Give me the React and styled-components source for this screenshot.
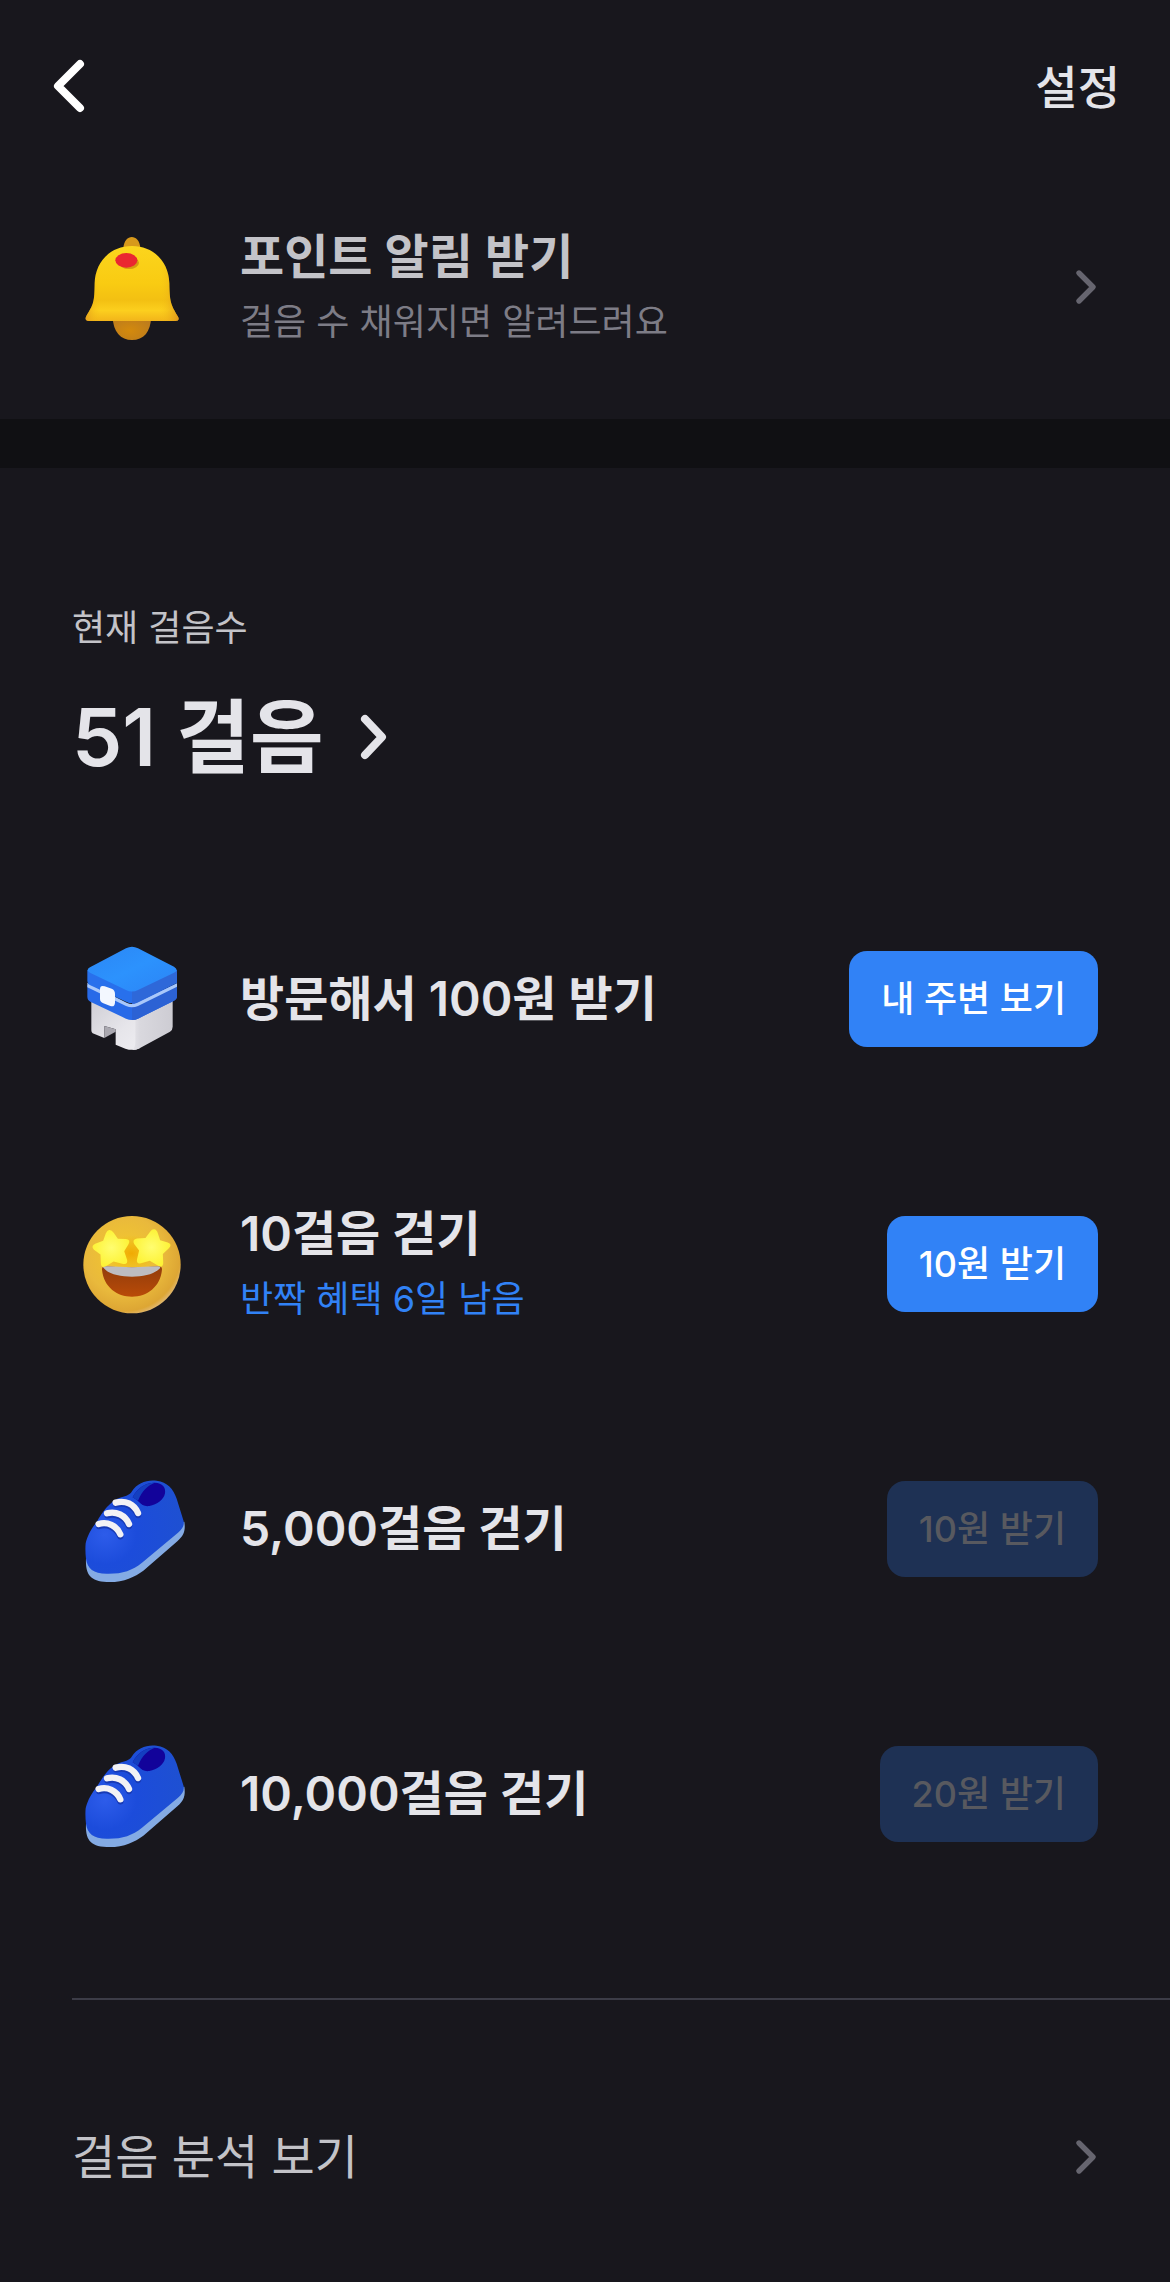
import React from "react";
import styled, { createGlobalStyle } from "styled-components";

const color = {
  page: "#18171d",
  band: "#101013",
  line: "#3c3c47",
  strong: "#e4e4e9",
  normal: "#c3c3c8",
  muted: "#7d7c86",
  faint: "#66656f",
  blue: "#3182f6",
  blueOff: "#1e3154",
  textOff: "#58595f",
};

const GlobalStyle = createGlobalStyle`
  *, *::before, *::after { box-sizing: border-box; }
  body {
    margin: 0;
    background: ${color.page};
    color: ${color.strong};
    font-family: Inter, "Noto Sans CJK KR", sans-serif;
  }
  h2, p, ul { margin: 0; padding: 0; }
  ul { list-style: none; }
  a { color: inherit; text-decoration: none; }
  button { font-family: inherit; border: 0; padding: 0; background: none; cursor: pointer; }
  svg { display: block; flex: none; }
`;

const Page = styled.div`
  min-height: 100vh;
  background: ${color.page};
`;

const Header = styled.header`
  display: flex;
  align-items: center;
  justify-content: space-between;
  height: 154px;
  padding: 20px 50px 0 48px;
`;

const BackButton = styled.button`
  display: flex;
`;

const SettingsButton = styled.button`
  color: ${color.strong};
  font-size: 46px;
  line-height: 64px;
  font-weight: 500;
`;

const Band = styled.div`
  height: 49px;
  background: ${color.band};
`;

const Row = styled.div`
  display: flex;
  align-items: center;
  gap: 48px;
  height: 265px;
  padding: 0 72px;
`;

const RowText = styled.div`
  flex: 1;
  min-width: 0;
`;

const RowTitle = styled.h2`
  color: ${(p) => (p.$dim ? color.normal : color.strong)};
  font-size: 48px;
  line-height: 70px;
  font-weight: 600;
`;

const RowNote = styled.p`
  color: ${(p) => (p.$accent ? color.blue : color.muted)};
  font-size: 36px;
  line-height: 60px;
`;

const RewardButton = styled.button`
  height: 96px;
  padding: 0 32px;
  border-radius: 18px;
  background: ${color.blue};
  color: #fff;
  font-size: 36px;
  line-height: 54px;
  font-weight: 500;
  white-space: nowrap;

  &:disabled {
    background: ${color.blueOff};
    color: ${color.textOff};
    cursor: default;
  }
`;

const Summary = styled.section`
  display: flex;
  flex-direction: column;
  align-items: flex-start;
  gap: 32px;
  padding: 133px 72px 79px;
`;

const SummaryLabel = styled.p`
  color: ${color.normal};
  font-size: 36px;
  line-height: 54px;
`;

const SummaryLink = styled.a`
  display: flex;
  align-items: center;
  gap: 36px;
  font-size: 80px;
  line-height: 100px;
  font-weight: 600;
`;

const Divider = styled.hr`
  height: 2px;
  margin: 72px 0 57px 72px;
  border: 0;
  background: ${color.line};
`;

const AnalysisLink = styled.a`
  display: flex;
  align-items: center;
  justify-content: space-between;
  height: 200px;
  padding: 0 72px;
  color: ${color.normal};
  font-size: 47px;
  line-height: 70px;
`;

function BackIcon() {
  return (
    <svg width="42" height="60" viewBox="0 0 42 60" fill="none" aria-hidden="true">
      <path d="M32 7 L10 29 L32 51" stroke="#fff" strokeWidth="8" strokeLinecap="round" strokeLinejoin="round" />
    </svg>
  );
}

function RowChevron() {
  return (
    <svg width="24" height="40" viewBox="0 0 24 40" fill="none" aria-hidden="true">
      <path d="M5 6 L19 20 L5 34" stroke={color.faint} strokeWidth="5.4" strokeLinecap="round" strokeLinejoin="round" />
    </svg>
  );
}

function SummaryChevron() {
  return (
    <svg width="28" height="48" viewBox="0 0 28 48" fill="none" aria-hidden="true">
      <path d="M5 6 L22 24 L5 42" stroke={color.strong} strokeWidth="8" strokeLinecap="round" strokeLinejoin="round" />
    </svg>
  );
}

function BellIcon() {
  return (
    <svg width="120" height="120" viewBox="36 21 360 360" aria-hidden="true">
      <defs>
        <linearGradient id="bellBody" x1="0" y1="0" x2="0" y2="1">
          <stop offset="0" stopColor="#fbd51d" />
          <stop offset="0.5" stopColor="#f9cb12" />
          <stop offset="0.72" stopColor="#f3c012" />
          <stop offset="0.86" stopColor="#fccf1e" />
          <stop offset="1" stopColor="#f2b41a" />
        </linearGradient>
        <linearGradient id="bellSide" x1="0" y1="0" x2="1" y2="0">
          <stop offset="0" stopColor="#e29a1c" stopOpacity="0.75" />
          <stop offset="0.16" stopColor="#f5c512" stopOpacity="0" />
          <stop offset="0.8" stopColor="#f5c512" stopOpacity="0" />
          <stop offset="1" stopColor="#dd921d" stopOpacity="0.85" />
        </linearGradient>
        <radialGradient id="bellClapper" cx="0.45" cy="0.6" r="0.6">
          <stop offset="0" stopColor="#d48a0c" />
          <stop offset="1" stopColor="#bd7c1d" />
        </radialGradient>
      </defs>
      <path d="M190 84 C193 40 238 40 241 84 Z" fill="#d7991b" />
      <path d="M158 290 H273 C273 336 250 360 216 360 C182 360 159 335 158 290 Z" fill="url(#bellClapper)" />
      <path d="M216 78 C150 78 106 126 104 190 C103 245 102 252 78 290 C75 298 78 303 86 303 H346 C355 303 358 298 354 290 C332 254 329 245 328 190 C326 126 282 78 216 78 Z" fill="url(#bellBody)" />
      <path d="M216 78 C150 78 106 126 104 190 C103 245 102 252 78 290 C75 298 78 303 86 303 H346 C355 303 358 298 354 290 C332 254 329 245 328 190 C326 126 282 78 216 78 Z" fill="url(#bellSide)" />
      <ellipse cx="207" cy="128" rx="30" ry="19" fill="#d59a10" />
      <ellipse cx="199" cy="121" rx="33" ry="22" fill="#ea2730" />
    </svg>
  );
}

function StoreIcon() {
  return (
    <svg width="120" height="120" viewBox="36 57 360 360" aria-hidden="true">
      <defs>
        <linearGradient id="storeTop" x1="0" y1="0" x2="1" y2="1">
          <stop offset="0" stopColor="#2b86f4" />
          <stop offset="0.5" stopColor="#2c92fd" />
          <stop offset="1" stopColor="#2b84f6" />
        </linearGradient>
        <linearGradient id="storeLeft" x1="0" y1="0" x2="1" y2="1">
          <stop offset="0" stopColor="#cfced5" />
          <stop offset="0.6" stopColor="#e6e5ea" />
          <stop offset="1" stopColor="#eeedf1" />
        </linearGradient>
        <linearGradient id="storeRight" x1="0" y1="0" x2="1" y2="0">
          <stop offset="0" stopColor="#e6e5ea" />
          <stop offset="0.2" stopColor="#d9d8de" />
          <stop offset="1" stopColor="#cdccd3" />
        </linearGradient>
      </defs>
      <path d="M94 240 L240 280 V384 Q220 394 196 386 L167 374 V328 L133 318 V354 L98 340 Q94 337 94 331 Z" fill="url(#storeLeft)" />
      <path d="M133 318 L167 328 V335 L133 354 Z" fill="#aaa8b0" />
      <path d="M226 270 L338 230 V320 Q338 330 330 335 L236 386 Q228 390 216 390 Q226 384 226 366 Z" fill="url(#storeRight)" />
      <path d="M82 194 L216 260 L351 194 V228 Q351 238 342 242 L234 296 Q216 304 198 296 L91 245 Q82 240 82 230 Z" fill="#286ae8" />
      <path d="M216 250 L351 190 V228 Q351 238 342 242 L234 296 Q225 301 216 300 Z" fill="#2c62d4" />
      <path d="M82 188 L200 248 Q216 256 232 248 L351 190 V200 L234 258 Q216 266 198 258 L82 202 Z" fill="#a9c8fa" />
      <path d="M82 150 H351 V188 L234 245 Q216 254 198 245 L91 196 Q82 192 82 184 Z" fill="#2870ec" />
      <path d="M216 200 L351 150 V188 L234 245 Q225 250 216 250 Z" fill="#2e68d9" />
      <path d="M90 142 L198 85 Q216 75 234 85 L342 140 Q358 150 342 158 L234 210 Q216 219 198 210 L90 158 Q76 150 90 142 Z" fill="url(#storeTop)" />
      <path d="M120 208 Q120 194 134 199 L155 206 Q165 210 165 222 V248 Q164 262 151 258 L130 250 Q120 246 120 237 Z" fill="#f3f7ff" />
    </svg>
  );
}

function StarFaceIcon() {
  const star = "M0 -44 Q6 -44 10 -36 L18 -20 L37 -17 Q49 -14 42 -4 L29 12 L33 34 Q33 46 22 42 L0 33 L-20 42 Q-32 46 -31 33 L-29 12 L-43 -2 Q-50 -12 -38 -16 L-18 -20 L-9 -37 Q-5 -44 0 -44 Z";
  return (
    <svg width="120" height="120" viewBox="36 42 360 360" aria-hidden="true">
      <defs>
        <radialGradient id="faceFill" cx="0.42" cy="0.4" r="0.62">
          <stop offset="0" stopColor="#f4c92c" />
          <stop offset="0.65" stopColor="#e9b93c" />
          <stop offset="0.93" stopColor="#dda634" />
          <stop offset="1" stopColor="#e0b568" />
        </radialGradient>
        <linearGradient id="mouthFill" x1="0" y1="0" x2="0" y2="1">
          <stop offset="0" stopColor="#923c0b" />
          <stop offset="1" stopColor="#b94b08" />
        </linearGradient>
        <radialGradient id="starGlow">
          <stop offset="0" stopColor="#f0a800" stopOpacity="0.95" />
          <stop offset="1" stopColor="#f0b800" stopOpacity="0" />
        </radialGradient>
        <radialGradient id="starFill">
          <stop offset="0" stopColor="#fffd70" />
          <stop offset="1" stopColor="#fdf338" />
        </radialGradient>
      </defs>
      <circle cx="216" cy="224" r="146" fill="url(#faceFill)" />
      <ellipse cx="214" cy="190" rx="80" ry="55" fill="url(#starGlow)" />
      <path d="M126 238 Q126 228 138 229 Q216 236 294 229 Q306 228 306 238 C302 290 262 320 216 320 C170 320 130 290 126 238 Z" fill="url(#mouthFill)" />
      <path d="M129 232 Q132 228 140 229 Q216 234 292 229 Q300 228 301 233 C286 252 252 260 216 260 C178 260 144 252 129 232 Z" fill="#bdbcc0" />
      <g fill="url(#starFill)">
        <path transform="translate(155 174) rotate(-8) scale(1.24)" d={star} />
        <path transform="translate(275 172) rotate(8) scale(1.24)" d={star} />
      </g>
    </svg>
  );
}

function ShoeIcon({ id }) {
  return (
    <svg width="120" height="120" viewBox="36 27 360 360" aria-hidden="true">
      <defs>
        <radialGradient id={id} cx="0.2" cy="0.58" r="0.8">
          <stop offset="0" stopColor="#2d5cea" />
          <stop offset="0.4" stopColor="#1c4cdb" />
          <stop offset="1" stopColor="#1e50d2" />
        </radialGradient>
      </defs>
      <path d="M78 296 C76 340 88 364 140 366 C190 368 222 352 250 332 L352 244 C372 226 377 212 373 185 Z" fill="#84abe4" />
      <path d="M77 250 C84 222 96 204 110 186 C128 156 150 122 184 112 C200 108 210 104 216 94 C232 68 262 58 290 62 C322 66 340 86 350 116 L371 184 C373 196 368 206 354 218 L246 308 C216 332 186 342 140 341 C100 340 82 326 78 296 Q75 270 77 250 Z" fill={`url(#${id})`} />
      <path d="M218 112 C230 86 256 68 284 68 C308 69 318 82 315 100 C311 120 292 134 268 138 C254 140 244 134 237 126 C231 120 224 116 218 112 Z" fill="#12039a" />
      <path d="M218 112 C230 86 256 68 284 68 C264 76 246 92 234 122 Z" fill="#143fc0" />
      <g fill="none" strokeLinecap="round" strokeWidth="19">
        <path d="M168 133 C196 125 222 138 234 165" stroke="#173ab5" />
        <path d="M142 166 C170 158 196 172 207 198" stroke="#173ab5" />
        <path d="M117 198 C142 190 170 202 181 229" stroke="#173ab5" />
        <path d="M167 128 C196 120 222 132 234 159" stroke="#f3f2f5" />
        <path d="M141 160 C168 152 196 166 207 192" stroke="#f3f2f5" />
        <path d="M116 192 C142 184 170 196 181 223" stroke="#f3f2f5" />
      </g>
    </svg>
  );
}

const missions = [
  { icon: <StoreIcon />, title: "방문해서 100원 받기", action: "내 주변 보기" },
  { icon: <StarFaceIcon />, title: "10걸음 걷기", note: "반짝 혜택 6일 남음", action: "10원 받기" },
  { icon: <ShoeIcon id="shoe5000" />, title: "5,000걸음 걷기", action: "10원 받기", disabled: true },
  { icon: <ShoeIcon id="shoe10000" />, title: "10,000걸음 걷기", action: "20원 받기", disabled: true },
];

export default function App() {
  return (
    <Page>
      <GlobalStyle />
      <Header>
        <BackButton type="button" aria-label="뒤로">
          <BackIcon />
        </BackButton>
        <SettingsButton type="button">설정</SettingsButton>
      </Header>

      <main>
        <Row as="a" href="#alerts">
          <BellIcon />
          <RowText>
            <RowTitle $dim>포인트 알림 받기</RowTitle>
            <RowNote>걸음 수 채워지면 알려드려요</RowNote>
          </RowText>
          <RowChevron />
        </Row>

        <Band />

        <Summary>
          <SummaryLabel>현재 걸음수</SummaryLabel>
          <SummaryLink href="#steps">
            51 걸음
            <SummaryChevron />
          </SummaryLink>
        </Summary>

        <ul>
          {missions.map((m) => (
            <Row as="li" key={m.title}>
              {m.icon}
              <RowText>
                <RowTitle>{m.title}</RowTitle>
                {m.note && <RowNote $accent>{m.note}</RowNote>}
              </RowText>
              <RewardButton type="button" disabled={m.disabled}>
                {m.action}
              </RewardButton>
            </Row>
          ))}
        </ul>

        <Divider />

        <AnalysisLink href="#analysis">
          걸음 분석 보기
          <RowChevron />
        </AnalysisLink>
      </main>
    </Page>
  );
}
